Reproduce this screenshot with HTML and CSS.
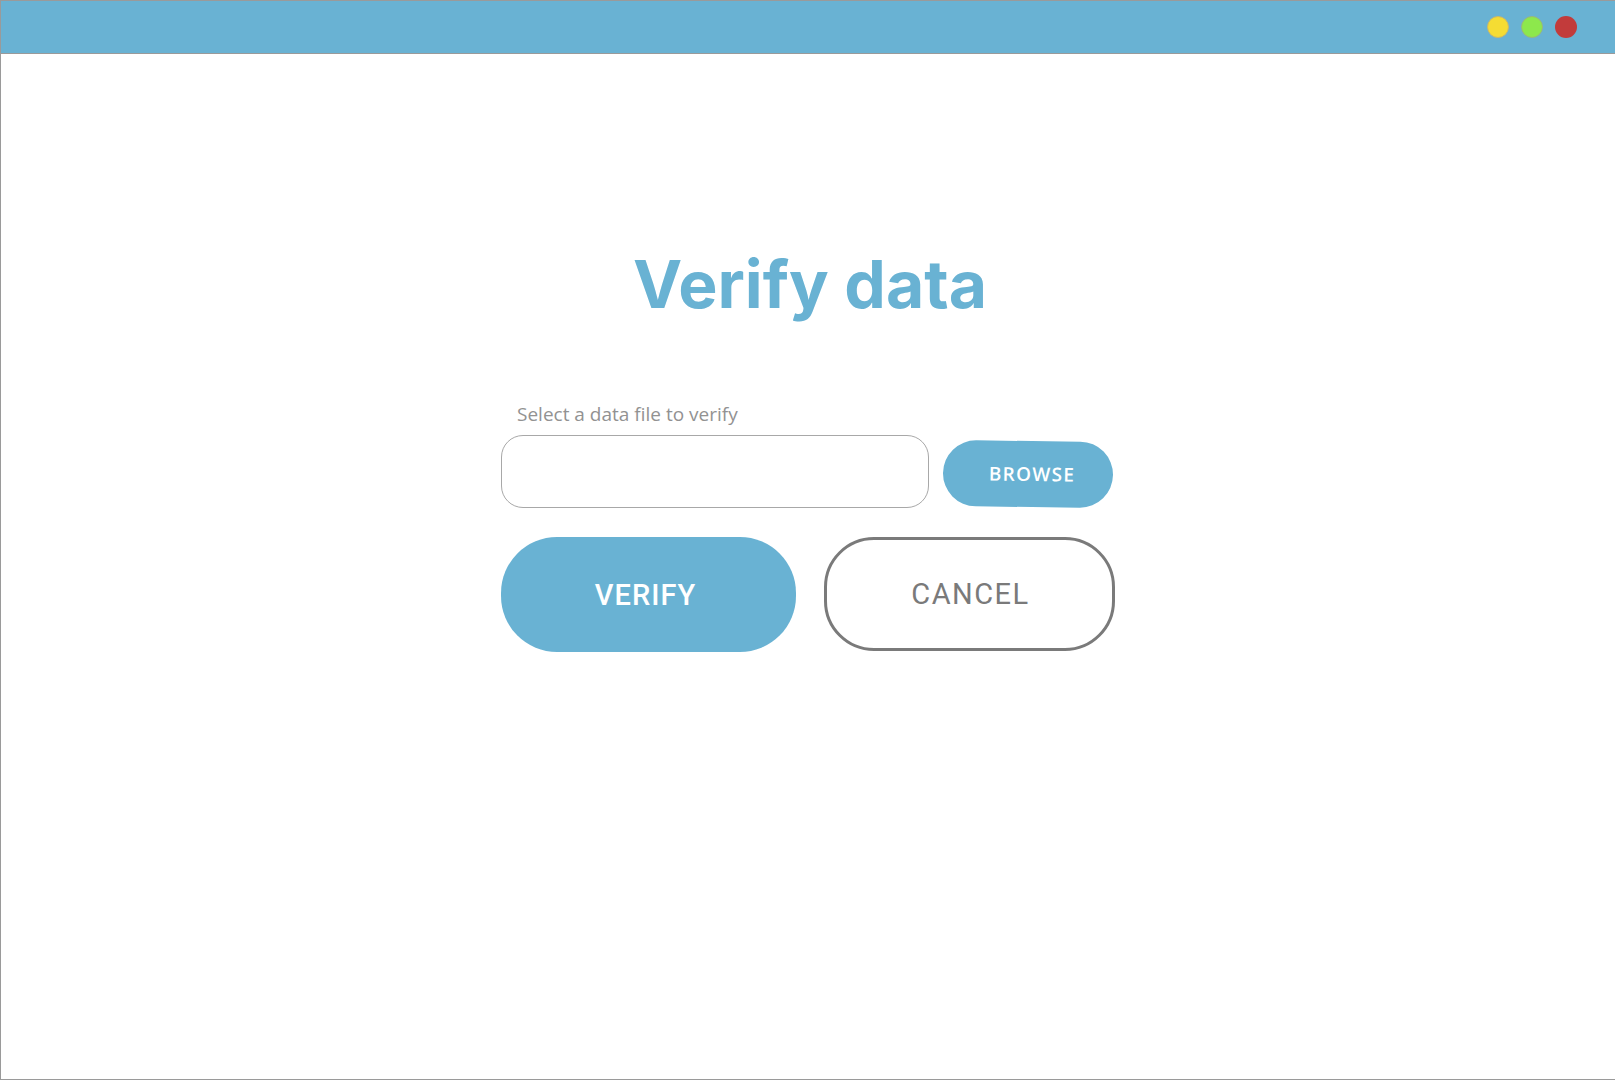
FILE: index.html
```html
<!DOCTYPE html>
<html lang="en">
<head>
<meta charset="utf-8">
<title>Verify data</title>
<link rel="stylesheet" href="styles.css">
</head>
<body>
<div class="frame">
  <header class="titlebar">
    <span class="dot dot-yellow"></span>
    <span class="dot dot-green"></span>
    <span class="dot dot-red"></span>
  </header>
  <main class="content">
    <h1 class="title">Verify data</h1>
    <div class="form">
      <label class="label" for="file">Select a data file to verify</label>
      <div class="file-row">
        <input class="file-input" id="file" type="text">
        <button class="browse" type="button">BROWSE</button>
      </div>
      <div class="actions">
        <button class="btn btn-verify" type="button">VERIFY</button>
        <button class="btn btn-cancel" type="button">CANCEL</button>
      </div>
    </div>
  </main>
</div>
</body>
</html>
```
FILE: styles.css
```css
* { box-sizing: border-box; }
html, body { margin: 0; padding: 0; background: #fff; }
body { font-family: Roboto, "Liberation Sans", sans-serif; }

.frame {
  width: 1615px;
  height: 1080px;
  border-left: 1px solid #9a9a9a;
  border-top: 1px solid #9a9a9a;
  border-bottom: 1px solid #9a9a9a;
  display: flex;
  flex-direction: column;
  overflow: hidden;
}

.titlebar {
  height: 53px;
  flex: none;
  background: #69b2d3;
  border-bottom: 1px solid #9a9a9a;
  display: flex;
  align-items: center;
  justify-content: flex-end;
  gap: 12px;
  padding-right: 38px;
}
.dot {
  width: 22px;
  height: 22px;
  border-radius: 50%;
  display: block;
}
.dot-yellow { background: #f5dc33; border: 1px solid #c9b86a; }
.dot-green { background: #8de84c; border: 1px solid #9ab87a; }
.dot-red { background: #c23b3b; }

.content {
  flex: 1;
  display: flex;
  flex-direction: column;
  align-items: center;
  padding-top: 191px;
}

.title {
  margin: 0;
  font-family: Inter, Roboto, "Liberation Sans", sans-serif;
  font-weight: 700;
  font-size: 66px;
  line-height: 78px;
  color: #69b2d3;
  padding-left: 4px;
}

.form {
  margin-top: 78px;
  width: 614px;
  display: flex;
  flex-direction: column;
}

.label {
  font-family: "Open Sans", "Noto Sans", sans-serif;
  font-size: 19px;
  line-height: 26px;
  color: #929292;
  padding-left: 16px;
}

.file-row {
  display: flex;
  align-items: center;
  gap: 14px;
  margin-top: 8px;
}
.file-input {
  width: 428px;
  height: 73px;
  border: 1px solid #a8a8a8;
  border-radius: 22px;
  background: #fff;
  outline: none;
}
.browse {
  width: 170px;
  height: 66px;
  margin-top: 5px;
  border: none;
  border-radius: 33px;
  background: #69b2d3;
  color: #fff;
  font-family: "Open Sans", "Noto Sans", sans-serif;
  font-weight: 600;
  font-size: 19px;
  letter-spacing: 1.3px;
  transform: rotate(0.7deg);
  padding: 0 0 0 8px;
}

.actions {
  display: flex;
  gap: 28px;
  margin-top: 29px;
  align-items: flex-start;
}
.btn {
  font-family: Roboto, "Liberation Sans", sans-serif;
  font-size: 29px;
  letter-spacing: 1px;
  padding: 0;
  background: #fff;
}
.btn-verify {
  width: 295px;
  height: 115px;
  border: none;
  border-radius: 56px;
  background: #69b2d3;
  color: #fff;
  font-weight: 500;
  padding-right: 6px;
}
.btn-cancel {
  width: 291px;
  height: 114px;
  border: 3px solid #7a7a7a;
  border-radius: 50px;
  color: #7a7a7a;
  font-weight: 400;
  letter-spacing: 1.5px;
  padding-left: 2px;
}
```
